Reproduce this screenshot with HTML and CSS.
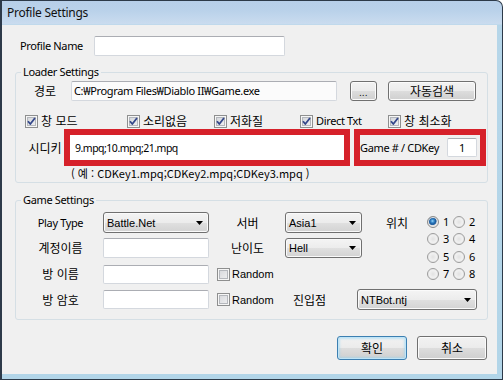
FILE: index.html
```html
<!DOCTYPE html>
<html lang="ko">
<head>
<meta charset="utf-8">
<title>Profile Settings</title>
<link rel="stylesheet" href="styles.css">
</head>
<body>
<div class="window">
  <div class="titlebar">Profile Settings</div>
  <div class="client">
    <div class="row profile-row">
      <span class="en profile-lbl">Profile Name</span>
      <span class="field profile-field"></span>
    </div>

    <div class="group loader">
      <span class="legend en">Loader Settings</span>
      <div class="row path-row">
        <span class="ko col-lbl">경로</span>
        <span class="field path-field en">C:₩Program Files₩Diablo II₩Game.exe</span>
        <span class="btn dots">...</span>
        <span class="btn auto ko">자동검색</span>
      </div>
      <div class="row check-row">
        <span class="chk c1"><span class="cb"><svg width="11" height="11" viewBox="0 0 11 11"><path d="M2 5.2 L4.3 8 L9 2" fill="none" stroke="#34478a" stroke-width="1.8" stroke-linejoin="round"/></svg></span><span class="ko">창 모드</span></span>
        <span class="chk c2"><span class="cb"><svg width="11" height="11" viewBox="0 0 11 11"><path d="M2 5.2 L4.3 8 L9 2" fill="none" stroke="#34478a" stroke-width="1.8" stroke-linejoin="round"/></svg></span><span class="ko">소리없음</span></span>
        <span class="chk c3"><span class="cb"><svg width="11" height="11" viewBox="0 0 11 11"><path d="M2 5.2 L4.3 8 L9 2" fill="none" stroke="#34478a" stroke-width="1.8" stroke-linejoin="round"/></svg></span><span class="ko">저화질</span></span>
        <span class="chk c4"><span class="cb"><svg width="11" height="11" viewBox="0 0 11 11"><path d="M2 5.2 L4.3 8 L9 2" fill="none" stroke="#34478a" stroke-width="1.8" stroke-linejoin="round"/></svg></span><span class="en">Direct Txt</span></span>
        <span class="chk c5"><span class="cb"><svg width="11" height="11" viewBox="0 0 11 11"><path d="M2 5.2 L4.3 8 L9 2" fill="none" stroke="#34478a" stroke-width="1.8" stroke-linejoin="round"/></svg></span><span class="ko">창 최소화</span></span>
      </div>
      <div class="row key-row">
        <span class="ko col-lbl">시디키</span>
        <div class="mark key-mark"><span class="key-field en">9.mpq;10.mpq;21.mpq</span></div>
        <div class="mark game-mark"><span class="en">Game # / CDKey</span><span class="field num-field en">1</span></div>
      </div>
      <div class="hint ko">( 예 : CDKey1.mpq;CDKey2.mpq;CDKey3.mpq )</div>
    </div>

    <div class="group game">
      <span class="legend en">Game Settings</span>
      <div class="game-top">
        <div class="game-rows">
          <div class="row grow r1">
            <span class="glbl en">Play Type</span>
            <span class="combo c-left"><span class="tah">Battle.Net</span><svg width="7" height="4" viewBox="0 0 7 4"><polygon points="0,0 7,0 3.5,4" fill="#000"/></svg></span>
            <span class="mid ko">서버</span>
            <span class="combo c-right"><span class="tah">Asia1</span><svg width="7" height="4" viewBox="0 0 7 4"><polygon points="0,0 7,0 3.5,4" fill="#000"/></svg></span>
          </div>
          <div class="row grow r2">
            <span class="glbl ko">계정이름</span>
            <span class="field gfield"></span>
            <span class="mid ko">난이도</span>
            <span class="combo c-right"><span class="tah">Hell</span><svg width="7" height="4" viewBox="0 0 7 4"><polygon points="0,0 7,0 3.5,4" fill="#000"/></svg></span>
          </div>
          <div class="row grow r3">
            <span class="glbl ko">방 이름</span>
            <span class="field gfield"></span>
            <span class="chk rnd"><span class="cb off"></span><span class="tah">Random</span></span>
          </div>
        </div>
        <div class="pos">
          <span class="ko pos-lbl">위치</span>
          <div class="radios">
            <span class="radio"><span class="rb on"></span><span class="en">1</span></span>
            <span class="radio"><span class="rb"></span><span class="en">2</span></span>
            <span class="radio"><span class="rb"></span><span class="en">3</span></span>
            <span class="radio"><span class="rb"></span><span class="en">4</span></span>
            <span class="radio"><span class="rb"></span><span class="en">5</span></span>
            <span class="radio"><span class="rb"></span><span class="en">6</span></span>
            <span class="radio"><span class="rb"></span><span class="en">7</span></span>
            <span class="radio"><span class="rb"></span><span class="en">8</span></span>
          </div>
        </div>
      </div>
      <div class="row grow r4">
        <span class="glbl ko">방 암호</span>
        <span class="field gfield"></span>
        <span class="chk rnd"><span class="cb off"></span><span class="tah">Random</span></span>
        <span class="ko entry-lbl">진입점</span>
        <span class="combo c-entry"><span class="tah">NTBot.ntj</span><svg width="7" height="4" viewBox="0 0 7 4"><polygon points="0,0 7,0 3.5,4" fill="#000"/></svg></span>
      </div>
    </div>

    <div class="buttons">
      <span class="btn ok ko">확인</span>
      <span class="btn cancel ko">취소</span>
    </div>
  </div>
</div>
</body>
</html>
```
FILE: styles.css
```css
* { box-sizing: border-box; margin: 0; padding: 0; }
html, body { width: 503px; height: 380px; overflow: hidden; }
body {
  font-family: "Noto Sans", "Noto Sans CJK KR", sans-serif;
  font-size: 11px;
  line-height: 16px;
  color: #000;
  background: #fff;
}
.en { font-family: "Noto Sans", "Noto Sans CJK KR", sans-serif; font-size: 11px; letter-spacing: -0.35px; }
.ko { font-family: "Noto Sans CJK KR", "Noto Sans", sans-serif; font-size: 12px; }
.tah { font-family: "Liberation Sans", "Noto Sans CJK KR", sans-serif; font-size: 11px; }

.window {
  width: 503px;
  height: 380px;
  display: flex;
  flex-direction: column;
  border: 1px solid #2d3a49;
  border-left-width: 2px;
  border-radius: 0 7px 0 0;
  padding: 0 5px 5px 0;
  background: linear-gradient(180deg, #b7cfe9 0, #bad2ea 10px, #cadcef 23px, #b6d6e9 24px, #b2d5e8 100%);
}
.titlebar {
  height: 24px;
  padding-left: 5px;
  display: flex;
  align-items: center;
  font-family: "Noto Sans", sans-serif;
  font-size: 12px;
  letter-spacing: -0.25px;
  color: #111;
}
.client {
  flex: 1;
  background: #f0f0f0;
  padding: 11px 10px 0 13px;
  display: flex;
  flex-direction: column;
}
.row { display: flex; align-items: center; }

.field {
  display: flex;
  align-items: center;
  background: #fff;
  border: 1px solid #d4d8de;
  border-top-color: #abadb3;
  border-radius: 2px;
}
.btn {
  display: flex;
  align-items: center;
  justify-content: center;
  border: 1px solid #707070;
  border-radius: 3px;
  background: linear-gradient(180deg, #f2f2f2 0, #ebebeb 50%, #dddddd 51%, #cfcfcf 100%);
  box-shadow: inset 0 0 0 1px #fbfbfb;
}

/* profile */
.profile-row { height: 20px; margin-left: 5px; }
.profile-lbl { width: 74px; }
.profile-field { width: 191px; height: 20px; }

/* groups */
.group {
  position: relative;
  width: 473px;
  border: 1px solid #d5dfe5;
  border-radius: 3px;
}
.legend {
  position: absolute;
  top: -9px;
  left: 5px;
  padding: 0 2px;
  background: #f0f0f0;
  line-height: 16px;
}
.loader { margin-top: 16px; height: 111px; padding: 8px 0 0 10px; }
.col-lbl { width: 38px; text-align: center; }
.path-row { height: 20px; }
.path-field { width: 266px; height: 20px; margin-left: 7px; padding-left: 2px; background: #fbfbfb; }
.dots { width: 27px; height: 20px; margin-left: 13px; align-items: flex-end; padding-bottom: 3px; font-size: 9px; line-height: 9px; letter-spacing: 0.5px; }
.auto { width: 88px; height: 20px; margin-left: 11px; }

.check-row { height: 16px; margin-top: 12px; margin-left: -1px; }
.chk { display: flex; align-items: center; }
.c1 { width: 102px; }
.c2 { width: 87px; }
.c3 { width: 86px; }
.c4 { width: 88px; }
.cb {
  width: 13px;
  height: 13px;
  flex: none;
  margin-right: 3px;
  border: 1px solid #8e8f8f;
  background: linear-gradient(135deg, #cfd2d7 0, #f4f4f5 100%);
  box-shadow: inset 0 0 0 1px #f6f6f6, inset 0 0 0 2px #b4b7bc;
  display: flex;
  align-items: center;
  justify-content: center;
}
.cb svg { display: block; }
.cb.off { margin-right: 2px; background: linear-gradient(135deg, #d3d5d9 0, #f2f2f3 100%); }

.key-row { height: 37px; }
.mark { border: 6px solid #d6212a; height: 37px; display: flex; align-items: center; }
.key-mark { width: 286px; }
.key-field { flex: 1; align-self: stretch; background: #fff; display: flex; align-items: center; padding-left: 5px; font-size: 10.5px; letter-spacing: -0.5px; }
.game-mark { width: 132px; margin-left: 4px; justify-content: space-between; padding-right: 3px; background: #f0f0f0; }
.num-field { width: 30px; height: 19px; justify-content: center; }
.hint { height: 14px; line-height: 14px; margin-left: 45px; font-size: 11px; }

/* game settings */
.game { margin-top: 17px; height: 120px; padding: 11px 0 0 10px; }
.game-top { display: flex; }
.grow { height: 20px; }
.r1 { height: 21px; }
.r2 { margin-top: 5px; }
.r3 { margin-top: 6px; }
.r4 { margin-top: 5px; height: 21px; }
.glbl { width: 69px; text-align: center; }
.gfield { width: 106px; height: 20px; margin-left: 8px; }
.r3 .gfield { height: 19px; }
.r4 .gfield { height: 19px; }
.combo {
  display: flex;
  align-items: center;
  justify-content: space-between;
  height: 21px;
  padding: 0 5px 0 3px;
  border: 1px solid #707070;
  border-radius: 3px;
  background: linear-gradient(180deg, #f4f4f4 0, #ececec 50%, #e0e0e0 51%, #d3d3d3 100%);
  box-shadow: inset 0 0 0 1px #fafafa;
}
.combo svg { display: block; }
.c-left { width: 106px; margin-left: 8px; }
.c-right { width: 77px; margin-left: 7px; }
.r2 .c-right { height: 20px; }
.mid { width: 61px; margin-left: 8px; text-align: center; }
.rnd { width: 61px; margin-left: 8px; }
.entry-lbl { width: 39px; margin-left: 15px; }
.c-entry { width: 120px; margin-left: 25px; }

.pos { display: flex; align-items: flex-start; margin-left: 24px; }
.pos-lbl { height: 21px; line-height: 21px; width: 24px; }
.radios {
  margin-left: 17px;
  display: grid;
  grid-template-columns: 26px 26px;
  grid-auto-rows: 17.5px;
  padding-top: 1px;
}
.radio { display: flex; align-items: center; }
.rb {
  width: 12px;
  height: 12px;
  flex: none;
  margin-right: 4px;
  border-radius: 50%;
  border: 1px solid #9c9c9c;
  background: radial-gradient(circle at 50% 50%, #e2e2e2 0, #eeeeee 3px, #f9f9f9 6px);
  box-shadow: inset 0 0 0 1px #e9e9e9;
}
.rb.on {
  border-color: #8a8a8a;
  background: radial-gradient(circle at 45% 40%, #9fd6f6 0, #3c8fd0 1.5px, #1d5c9f 3px, #2d6aa8 3.8px, #dcdcdc 4.4px, #f2f2f2 6px);
}

/* buttons */
.buttons { display: flex; justify-content: flex-end; gap: 10px; margin-top: 16px; }
.buttons .btn { width: 70px; height: 24px; }
.btn.ok {
  border-color: #3c7fb1;
  box-shadow: inset 0 0 0 1px #bfe4f7, inset 0 0 2px 2px rgba(140, 210, 245, 0.45);
}
```
